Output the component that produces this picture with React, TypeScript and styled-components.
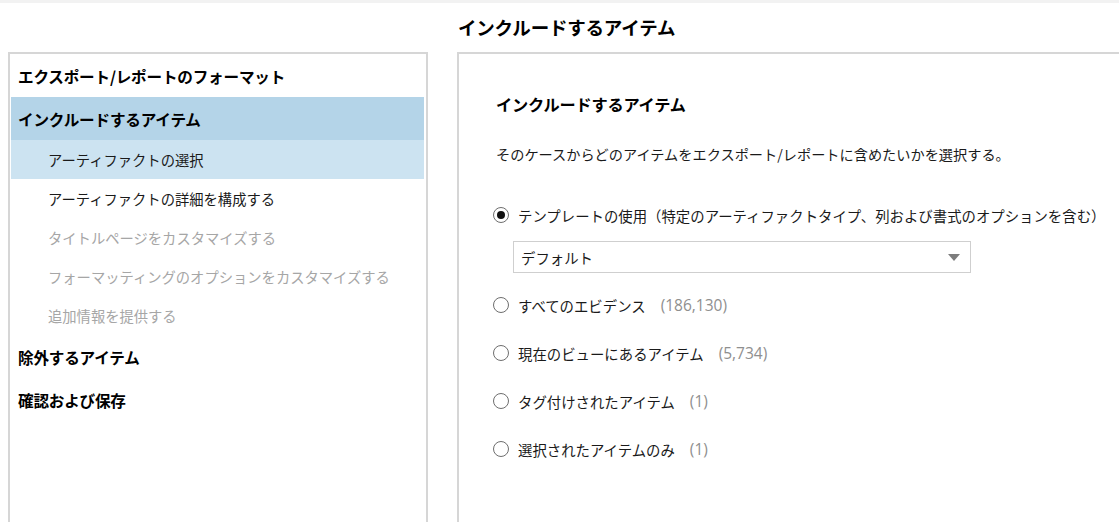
import React from "react";
import styled, { createGlobalStyle } from "styled-components";

const GlobalStyle = createGlobalStyle`
  html, body {
    margin: 0;
    padding: 0;
    background: #ffffff;
    overflow: hidden;
  }
  body {
    font-family: "Noto Sans CJK JP", "Noto Sans", "Liberation Sans", sans-serif;
    color: #000;
  }
`;

const Page = styled.div`
  width: 1119px;
  height: 522px;
  overflow: hidden;
  display: flex;
  flex-direction: column;
`;

const TopStrip = styled.div`
  height: 3px;
  background: #f2f2f2;
  flex-shrink: 0;
`;

const Layout = styled.div`
  display: grid;
  grid-template-columns: 420px 700px;
  grid-template-rows: 49px 1fr;
  column-gap: 29px;
  padding-left: 8px;
  flex: 1;
`;

const PageTitle = styled.h1`
  grid-column: 2;
  margin: 0;
  padding-left: 1px;
  font-size: 18.5px;
  font-weight: 700;
  line-height: 49px;
  letter-spacing: -0.2px;
`;

const NavPanel = styled.nav`
  border: 2px solid #d6d6d6;
  border-bottom: none;
  padding: 0 2px 0 1px;
  min-height: 480px;
`;

const NavHeading = styled.div<{ $active?: boolean }>`
  height: 43px;
  display: flex;
  align-items: center;
  padding-left: 7px;
  font-size: 15.6px;
  font-weight: 700;
  letter-spacing: -0.2px;
  background: ${(p) => (p.$active ? "#b4d4e8" : "transparent")};
`;

const NavSub = styled.div<{ $active?: boolean; $disabled?: boolean }>`
  height: 39px;
  display: flex;
  align-items: center;
  padding-left: 37px;
  font-size: 14.3px;
  color: ${(p) => (p.$disabled ? "#a6a6a6" : "#1a1a1a")};
  background: ${(p) => (p.$active ? "#cce3f1" : "transparent")};
`;

const ContentPanel = styled.section`
  border-top: 2px solid #d6d6d6;
  border-left: 2px solid #d6d6d6;
  padding: 38px 0 0 37px;
  min-height: 480px;
`;

const SectionTitle = styled.h2`
  margin: 0;
  font-size: 16.2px;
  font-weight: 700;
  line-height: 24px;
  letter-spacing: -0.2px;
`;

const Description = styled.p`
  margin: 28px 0 0;
  font-size: 14.2px;
  line-height: 20px;
  color: #1a1a1a;
`;

const Options = styled.div`
  margin-top: 39px;
  display: flex;
  flex-direction: column;
  margin-left: -3px;
`;

const OptionRow = styled.label`
  display: flex;
  align-items: center;
  height: 24px;
  gap: 9px;
  font-size: 14.4px;
  color: #1a1a1a;
  margin-bottom: 24px;
`;

const RadioCircle = styled.span<{ $checked?: boolean }>`
  width: 14px;
  height: 14px;
  border: 1.5px solid #6e6e6e;
  border-radius: 50%;
  display: inline-flex;
  align-items: center;
  justify-content: center;
  flex-shrink: 0;
  &::after {
    content: "";
    width: 8px;
    height: 8px;
    border-radius: 50%;
    background: ${(p) => (p.$checked ? "#111" : "transparent")};
  }
`;

const Count = styled.span`
  color: #8f8f8f;
  font-family: "Open Sans", "Noto Sans", sans-serif;
  font-size: 15.5px;
  margin-left: 6px;
`;

const Select = styled.div`
  width: 439px;
  height: 30px;
  border: 1px solid #cfcfcf;
  margin: -10px 0 20px 20px;
  display: flex;
  align-items: center;
  justify-content: space-between;
  padding: 0 10px 0 7px;
  box-sizing: content-box;
  font-size: 14.4px;
  color: #1a1a1a;
`;

const Arrow = styled.span`
  width: 0;
  height: 0;
  border-left: 6px solid transparent;
  border-right: 6px solid transparent;
  border-top: 7px solid #7d7d7d;
`;

const options = [
  { label: "すべてのエビデンス", count: "(186,130)" },
  { label: "現在のビューにあるアイテム", count: "(5,734)" },
  { label: "タグ付けされたアイテム", count: "(1)" },
  { label: "選択されたアイテムのみ", count: "(1)" },
];

export default function App() {
  return (
    <Page>
      <GlobalStyle />
      <TopStrip />
      <Layout>
        <PageTitle>インクルードするアイテム</PageTitle>
        <NavPanel>
          <NavHeading>エクスポート/レポートのフォーマット</NavHeading>
          <NavHeading $active>インクルードするアイテム</NavHeading>
          <NavSub $active>アーティファクトの選択</NavSub>
          <NavSub>アーティファクトの詳細を構成する</NavSub>
          <NavSub $disabled>タイトルページをカスタマイズする</NavSub>
          <NavSub $disabled>フォーマッティングのオプションをカスタマイズする</NavSub>
          <NavSub $disabled>追加情報を提供する</NavSub>
          <NavHeading>除外するアイテム</NavHeading>
          <NavHeading>確認および保存</NavHeading>
        </NavPanel>
        <ContentPanel>
          <SectionTitle>インクルードするアイテム</SectionTitle>
          <Description>
            そのケースからどのアイテムをエクスポート/レポートに含めたいかを選択する。
          </Description>
          <Options>
            <OptionRow>
              <RadioCircle $checked />
              テンプレートの使用（特定のアーティファクトタイプ、列および書式のオプションを含む）
            </OptionRow>
            <Select>
              デフォルト
              <Arrow />
            </Select>
            {options.map((o) => (
              <OptionRow key={o.label}>
                <RadioCircle />
                {o.label}
                <Count>{o.count}</Count>
              </OptionRow>
            ))}
          </Options>
        </ContentPanel>
      </Layout>
    </Page>
  );
}
